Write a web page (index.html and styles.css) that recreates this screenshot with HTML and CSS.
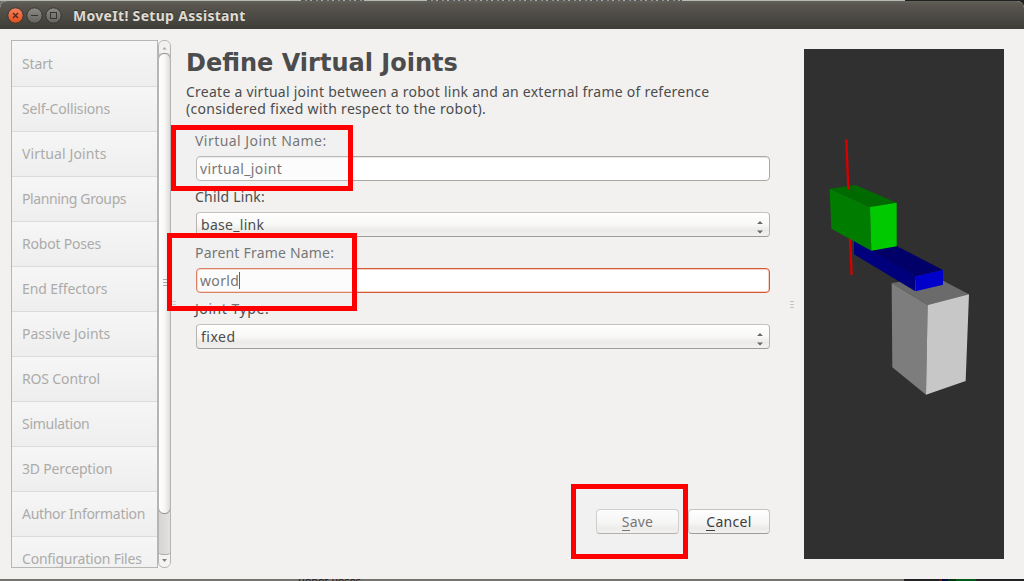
FILE: index.html
```html
<!DOCTYPE html>
<html lang="en">
<head>
<meta charset="utf-8">
<title>MoveIt! Setup Assistant</title>
<link rel="stylesheet" href="styles.css">
</head>
<body>
<div class="desktop">
  <i class="behind behind-a"></i><i class="behind behind-b"></i><i class="behind behind-c"></i>
  <div class="behind-text"><span>Robot Poses</span></div>
  <div class="window">
    <header class="titlebar">
      <svg class="controls" width="60" height="28" viewBox="0 0 60 28">
        <defs>
          <linearGradient id="close" x1="0" y1="0" x2="0" y2="1"><stop offset="0" stop-color="#f58260"/><stop offset="1" stop-color="#e04e1c"/></linearGradient>
          <linearGradient id="grey" x1="0" y1="0" x2="0" y2="1"><stop offset="0" stop-color="#8b8a84"/><stop offset="1" stop-color="#65645e"/></linearGradient>
        </defs>
        <circle cx="10.500" cy="14.500" r="7.700" fill="url(#close)" stroke="#37352f"/>
        <path d="M8 12l5 5M13 12l-5 5" stroke="#47251a" stroke-width="1.200"/>
        <circle cx="29.500" cy="14.500" r="7.700" fill="url(#grey)" stroke="#37352f"/>
        <path d="M26 14.500h7" stroke="#363530" stroke-width="1.200"/>
        <circle cx="48.500" cy="14.500" r="7.700" fill="url(#grey)" stroke="#37352f"/>
        <rect x="45.500" y="11.500" width="6" height="6" fill="none" stroke="#363530"/>
      </svg>
      <span class="title">MoveIt! Setup Assistant</span>
    </header>
    <main class="content">
      <nav class="steps">
        <ul class="step-list">
          <li class="step first"><span class="t-start">Start</span></li>
          <li class="step"><span class="t-self">Self-Collisions</span></li>
          <li class="step"><span class="t-virtual">Virtual Joints</span></li>
          <li class="step"><span class="t-planning">Planning Groups</span></li>
          <li class="step"><span class="t-poses">Robot Poses</span></li>
          <li class="step"><span class="t-end">End Effectors</span></li>
          <li class="step"><span class="t-passive">Passive Joints</span></li>
          <li class="step"><span class="t-ros">ROS Control</span></li>
          <li class="step"><span class="t-sim">Simulation</span></li>
          <li class="step"><span class="t-perc">3D Perception</span></li>
          <li class="step"><span class="t-author">Author Information</span></li>
          <li class="step"><span class="t-config">Configuration Files</span></li>
        </ul>
        <div class="scrollbar">
          <svg class="arrow" width="11" height="12"><path d="M3.500 8.500h4L5.500 6z" fill="#aaa8a5"/></svg>
          <div class="thumb"></div>
          <svg class="arrow-down" width="11" height="14"><path d="M-1 0Q0 5 4 5H7Q11 5 12 0V14H-1z" transform="translate(0 -4)" fill="none"/><path d="M0 0Q1 1.500 3 1.500H8Q10 1.500 11 0V14H0z" fill="#f4f3f2"/><path d="M0 0Q1 1.500 3 1.500H8Q10 1.500 11 0" fill="none" stroke="#b0aeab"/><path d="M3 6h5L5.500 9z" fill="#85837f"/></svg>
        </div>
      </nav>
      <section class="panel">
        <h1 class="heading">Define Virtual Joints</h1>
        <p class="intro"><span class="intro-a">Create a virtual joint between a robot link and an external frame of reference</span><br><span class="intro-b">(considered fixed with respect to the robot).</span></p>
        <div class="form">
          <div class="label top"><span class="l-vjn">Virtual Joint Name:</span></div>
          <div class="field"><span class="v-vj">virtual_joint</span></div>
          <div class="label"><span class="l-child">Child Link:</span></div>
          <div class="field combo"><span class="v-base">base_link</span><svg class="spin" width="8" height="24"><path d="M1 11h6L4 8zM1 17.500h6l-3 3z" fill="#686764"/></svg></div>
          <div class="label"><span class="l-parent">Parent Frame Name:</span></div>
          <div class="field focused"><span class="v-world">world</span><i class="caret"></i></div>
          <div class="label"><span class="l-type">Joint Type:</span></div>
          <div class="field combo"><span class="v-fixed">fixed</span><svg class="spin" width="8" height="24"><path d="M1 11h6L4 8zM1 17.500h6l-3 3z" fill="#686764"/></svg></div>
        </div>
        <div class="buttons">
          <div class="button save"><span class="b-save"><u class="key">S</u>ave</span></div>
          <div class="button cancel"><span class="b-cancel"><u class="key">C</u>ancel</span></div>
        </div>
      </section>
      <aside class="viewport">
        <svg width="200" height="510" viewBox="0 0 200 510">
          <g transform="translate(0 71) scale(.33333)">
            <path d="M263 489L388 472L420 484L495 523L371 555z" fill="#6b6b6b"/>
            <path d="M263 489L371 555L366 824L265 742z" fill="#7d7d7d"/>
            <path d="M371 555L495 523L485 783L366 824z" fill="#c7c7c7"/>
            <path d="M150 366L278 378L417 450L335 469z" fill="#000068"/>
            <path d="M150 363L202 391L335 469L334 514L150 403z" fill="#00007d"/>
            <path d="M335 469L417 450V494L335 514z" fill="#0000cb"/>
            <path d="M138 355L143 465" stroke="#d60000" stroke-width="7"/>
            <path d="M77 206L154 195L278 248L198 261z" fill="#006a00"/>
            <path d="M77 206L198 261L202 392L82 326z" fill="#007d00"/>
            <path d="M198 261L278 248V379L202 392z" fill="#00c900"/>
            <path d="M127 58L133 209" stroke="#d60000" stroke-width="7"/>
          </g>
        </svg>
      </aside>
    </main>
    <i class="grip grip-a"></i><i class="grip grip-b"></i><i class="grip grip-c"></i>
  </div>
  <div class="highlight hl-name"></div>
  <div class="highlight hl-parent"></div>
  <div class="highlight hl-save"></div>
</div>
</body>
</html>
```
FILE: styles.css
```css
* { box-sizing: border-box; }
body { margin: 0; font-family: "Noto Sans", "Open Sans", sans-serif; font-size: 14px; color: #4c4c4c; overflow: hidden; }
.desktop { position: relative; width: 1024px; height: 581px; padding: 1px 0 2px; background: linear-gradient(90deg, #747370 904px, #202120 904px); overflow: hidden; }
.desktop::before { content: ""; position: absolute; left: 0; top: 0; width: 905px; height: 1px; background: #b7b9b5; }
.behind { position: absolute; top: 0; height: 1px; background: repeating-linear-gradient(90deg, #55585b 0 4px, #93928f 4px 6px, #5c5b5a 6px 9px, #a9aaa8 9px 11px); }
.behind-a { left: 301px; width: 63px; }
.behind-b { left: 427px; width: 255px; }
.behind-c { left: 939px; top: 579px; width: 37px; height: 2px; background: linear-gradient(90deg, #6b1010 3px, #000a45 3px 9px, #04330e 9px 17px, #005a1a 17px); }
.behind-text { position: absolute; left: 298px; top: 579px; height: 2px; overflow: hidden; font-size: 11px; line-height: 11px; letter-spacing: -.1px; color: #222; white-space: nowrap; }
.behind-text span { display: block; margin-top: -4px; }
.window { position: relative; height: 578px; background: #f2f1f0; border-radius: 7px 7px 0 0; overflow: hidden; }
.titlebar { display: flex; height: 28px; padding-left: 5px; background: linear-gradient(#64635a 0, #59574f 3px, #3e3d38 100%); }
.controls { flex: none; }
.title { margin-left: 8px; font-size: 14px; font-weight: 700; line-height: 30px; letter-spacing: .31px; color: #dfdbd2; white-space: nowrap; text-shadow: 0 -1px #303028; }
.content { display: flex; height: 550px; padding: 11px 20px 11px 11px; }
.steps { display: flex; width: 160px; height: 528px; }
.step-list { width: 147px; height: 528px; margin: 0; padding: 0; list-style: none; border: 1px solid #b8b6b3; overflow: hidden; }
.step { height: 45px; padding-left: 10px; line-height: 44px; color: #acaba9; white-space: nowrap; border-bottom: 1px solid #dcdbda; background: linear-gradient(#f6f6f6, #eeeeee); }
.step.first { height: 46px; line-height: 46px; }
.t-start { letter-spacing: -.15px; }
.t-self { letter-spacing: -.18px; }
.t-virtual { letter-spacing: .12px; }
.t-planning { letter-spacing: -.38px; }
.t-poses { letter-spacing: -.2px; }
.t-end { letter-spacing: -.1px; }
.t-ros { letter-spacing: -.15px; }
.t-sim { letter-spacing: -.28px; }
.t-perc { letter-spacing: -.18px; }
.t-author { letter-spacing: -.3px; }
.t-config { letter-spacing: -.2px; }
.scrollbar { display: flex; flex-direction: column; width: 13px; height: 528px; border: 1px solid #b6b4b1; border-radius: 6px; background: linear-gradient(90deg, #d7d5d3, #e3e1df); overflow: hidden; }
.arrow { flex: none; display: block; background: #f2f1f0; }
.thumb { height: 461px; margin: 0 -1px; border: 1px solid #93918e; border-radius: 6px; background: linear-gradient(90deg, #fff, #f7f6f5 55%, #dddbd9); }
.arrow-down { display: block; margin-top: auto; }
.panel { display: flex; flex-direction: column; width: 599px; padding-left: 15px; }
.heading { height: 43px; margin: 0; font: 700 24px/46px "DejaVu Sans", sans-serif; color: #4c4c4c; white-space: nowrap; }
.intro { height: 43px; margin: 0; line-height: 17px; white-space: nowrap; }
.intro-a { letter-spacing: .245px; }
.intro-b { letter-spacing: .3px; }
.form { width: 574px; margin-left: 10px; }
.label { height: 31px; margin-left: -1px; line-height: 32px; white-space: nowrap; }
.label.top { height: 30px; line-height: 30px; }
.l-vjn { letter-spacing: .45px; }
.l-child { letter-spacing: .2px; }
.l-parent { letter-spacing: .2px; }
.l-type { letter-spacing: .55px; }
.v-vj { letter-spacing: .37px; }
.v-base { letter-spacing: .3px; }
.v-world { letter-spacing: .35px; }
.v-fixed { letter-spacing: .5px; }
.field { display: flex; align-items: center; height: 25px; padding-left: 3px; border: 1px solid #aaa7a2; border-radius: 4px; background: #fff; line-height: 23px; box-shadow: inset 0 1px #e8e7e5; }
.combo { padding: 0 5px 0 4px; border-color: #c5c3c0 #b5b3b0 #9e9c98; background: linear-gradient(#fff, #f8f8f7 50%, #ebeae8 75%, #f2f1f0); box-shadow: none; }
.focused { border-color: #d25a35; box-shadow: inset 0 0 0 1px #f7d0c3; }
.caret { width: 1px; height: 17px; background: #333; }
.spin { margin-left: auto; }
.buttons { display: flex; gap: 9px; margin: 160px 0 0 410px; }
.button { display: flex; justify-content: center; width: 83px; height: 25px; border: 1px solid #c5c3c0; border-bottom-color: #9e9c98; border-radius: 4px; background: linear-gradient(#fff, #f7f6f6 55%, #ebeae8 80%, #f2f1f0); line-height: 24px; }
.cancel { width: 82px; color: #3c3c3c; }
.b-save { letter-spacing: .2px; }
.b-cancel { letter-spacing: .3px; }
.key { text-decoration: none; background: linear-gradient(currentColor, currentColor) 0 100% / 100% 1px no-repeat; }
.viewport { width: 200px; height: 510px; margin: 9px 0 0 auto; background: #303030; }
.viewport svg { display: block; }
.grip { position: absolute; width: 4px; height: 7px; background: repeating-linear-gradient(#c2c0be 0 1px, transparent 1px 3px); }
.grip-a { left: 163px; top: 278px; background: repeating-linear-gradient(#aaa 0 1px, transparent 1px 3px); }
.grip-b { left: 172px; top: 300px; }
.grip-c { left: 790px; top: 300px; }
.highlight { position: absolute; border: 5px solid #f00; background: rgba(244, 244, 244, .25); }
.hl-name { left: 171px; top: 125px; width: 182px; height: 66px; }
.hl-parent { left: 167px; top: 233px; width: 190px; height: 78px; }
.hl-save { left: 571px; top: 484px; width: 117px; height: 75px; }
```
